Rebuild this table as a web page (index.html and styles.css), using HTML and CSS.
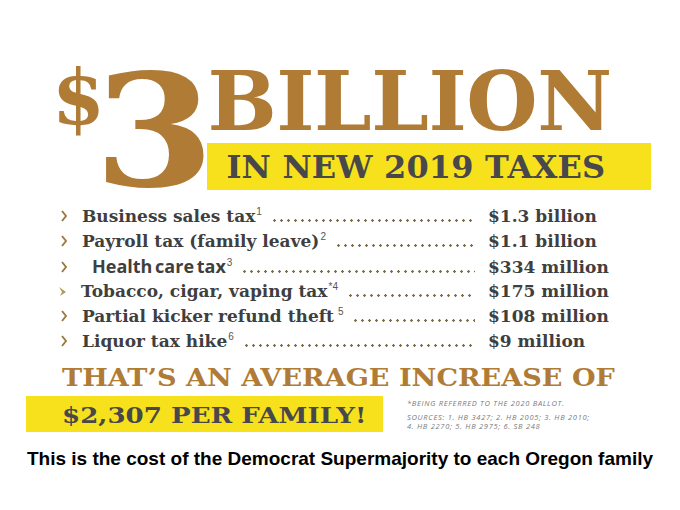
FILE: index.html
```html
<!DOCTYPE html>
<html lang="en">
<head>
<meta charset="utf-8">
<title>$3 Billion in new 2019 taxes</title>
<link rel="stylesheet" href="styles.css">
</head>
<body>
<main class="poster">
  <header class="headline">
    <span class="dollar">$</span>
    <span class="three">3</span>
    <div class="head-right">
      <div class="billion">BILLION</div>
      <div class="band"><span>IN NEW 2019 TAXES</span></div>
    </div>
  </header>

  <ul class="taxes">
    <li class="row">
      <svg class="chev" viewBox="0 0 6 12" width="6" height="12"><path d="M1 1 L5 6 L1 11" fill="none" stroke="#9a7840" stroke-width="1.9"/></svg>
      <span class="label">Business sales tax<sup>1</sup></span>
      <span class="lead"></span>
      <span class="amt">$1.3 billion</span>
    </li>
    <li class="row">
      <svg class="chev" viewBox="0 0 6 12" width="6" height="12"><path d="M1 1 L5 6 L1 11" fill="none" stroke="#9a7840" stroke-width="1.9"/></svg>
      <span class="label">Payroll tax (family leave)<sup>2</sup></span>
      <span class="lead"></span>
      <span class="amt">$1.1 billion</span>
    </li>
    <li class="row">
      <svg class="chev" viewBox="0 0 6 12" width="6" height="12"><path d="M1 1 L5 6 L1 11" fill="none" stroke="#9a7840" stroke-width="1.9"/></svg>
      <span class="label label-sans">Health care tax<sup>3</sup></span>
      <span class="lead"></span>
      <span class="amt">$334 million</span>
    </li>
    <li class="row">
      <svg class="chev chev-fill" viewBox="0 0 8 12" width="8" height="12"><path d="M0 2 L7 7 L1 11 L3 7 Z" fill="#b39a5a"/></svg>
      <span class="label">Tobacco, cigar, vaping tax<sup>*4</sup></span>
      <span class="lead"></span>
      <span class="amt">$175 million</span>
    </li>
    <li class="row">
      <svg class="chev" viewBox="0 0 6 12" width="6" height="12"><path d="M1 1 L5 6 L1 11" fill="none" stroke="#9a7840" stroke-width="1.9"/></svg>
      <span class="label">Partial kicker refund theft<sup class="sup-gap">5</sup></span>
      <span class="lead"></span>
      <span class="amt">$108 million</span>
    </li>
    <li class="row">
      <svg class="chev" viewBox="0 0 6 12" width="6" height="12"><path d="M1 1 L5 6 L1 11" fill="none" stroke="#9a7840" stroke-width="1.9"/></svg>
      <span class="label">Liquor tax hike<sup>6</sup></span>
      <span class="lead"></span>
      <span class="amt">$9 million</span>
    </li>
  </ul>

  <section class="summary">
    <div class="average"><span class="wide">THAT’S AN AVERAGE INCREASE OF</span></div>
    <div class="summary-row">
      <div class="band2"><span class="wide">$2,307 PER FAMILY!</span></div>
      <div class="notes">
        <p class="note-first">*BEING REFERRED TO THE 2020 BALLOT.</p>
        <p>SOURCES: 1. HB 3427; 2. HB 2005; 3. HB 2010;</p>
        <p>4. HB 2270; 5. HB 2975; 6. SB 248</p>
      </div>
    </div>
  </section>

  <p class="caption">This is the cost of the Democrat Supermajority to each Oregon family</p>
</main>
</body>
</html>
```

FILE: styles.css
```css
html, body {
  margin: 0;
  padding: 0;
  background: #ffffff;
}

.poster {
  width: 680px;
  height: 510px;
  overflow: hidden;
  font-family: "DejaVu Serif", "Liberation Serif", serif;
  font-weight: bold;
}

/* ---------- headline ---------- */
.headline {
  display: flex;
  align-items: flex-start;
  padding-top: 60px;
  padding-left: 52px;
  color: #b07c35;
}

.dollar {
  font-size: 76px;
  line-height: 76px;
  margin-top: 0;
}

.three {
  display: inline-block;
  font-size: 156px;
  line-height: 120px;
  margin-top: 12px;
  margin-left: -11px;
  margin-right: -1px;
  transform: scaleX(1.11);
  transform-origin: left center;
}

.head-right {
  display: flex;
  flex-direction: column;
  margin-left: 6px;
}

.billion {
  font-size: 82px;
  line-height: 82px;
  height: 82px;
  letter-spacing: -0.5px;
}

.band {
  margin-top: 1px;
  width: 444px;
  height: 47px;
  background: #f6e11c;
  display: flex;
  align-items: center;
  padding-left: 19px;
  box-sizing: border-box;
  color: #48484c;
  font-size: 32px;
  letter-spacing: 0.2px;
}

/* ---------- tax list ---------- */
.taxes {
  list-style: none;
  margin: 12px 0 0 0;
  padding: 0 0 0 61px;
  width: 628px;
  box-sizing: border-box;
  color: #3f3f40;
  font-size: 17px;
  line-height: 25px;
}

.row {
  display: flex;
  align-items: baseline;
  height: 25px;
}

.chev {
  flex: none;
  width: 6px;
  margin-right: 15px;
}

.chev-fill {
  width: 8px;
  margin-left: -2px;
  margin-right: 14px;
}

.label {
  white-space: nowrap;
}

.label-sans {
  font-family: "Open Sans", "Liberation Sans", sans-serif;
  font-size: 18px;
  margin-left: 10px;
  word-spacing: -2px;
}

sup {
  font-family: "Liberation Sans", sans-serif;
  font-weight: normal;
  font-size: 10px;
  line-height: 0;
  vertical-align: 7px;
  margin-left: 1px;
  color: #555;
}

.sup-gap {
  margin-left: 4px;
}

.lead {
  flex: 1;
  height: 3px;
  margin: 0 13px 0 9px;
  background-image: radial-gradient(circle, #7d6e4e 1px, rgba(255,255,255,0) 1.5px);
  background-size: 7px 3px;
  background-repeat: repeat-x;
  background-position: 0 0;
}

.amt {
  flex: none;
  width: 140px;
  white-space: nowrap;
}

/* ---------- summary ---------- */
.summary {
  margin-top: 12px;
}

.wide {
  display: inline-block;
  white-space: nowrap;
  transform-origin: left center;
}

.average {
  padding-left: 62px;
  color: #b07c35;
  font-size: 24px;
  line-height: 24px;
  height: 24px;
}

.average .wide {
  transform: scaleX(1.13);
}

.summary-row {
  display: flex;
  align-items: flex-start;
  margin-top: 6px;
}

.band2 {
  margin-left: 26px;
  width: 357px;
  height: 36px;
  background: #f6e11c;
  display: flex;
  align-items: center;
  padding-left: 36px;
  box-sizing: border-box;
  color: #48484c;
  font-size: 23px;
}

.band2 .wide {
  transform: scaleX(1.135);
}

.notes {
  margin-left: 24px;
  margin-top: 3px;
  font-family: "Open Sans", "Liberation Sans", sans-serif;
  font-style: italic;
  font-weight: normal;
  font-size: 7.5px;
  letter-spacing: 0.7px;
  color: #7a7a7a;
}

.notes p {
  margin: 0;
  line-height: 9px;
  white-space: nowrap;
}

.notes .note-first {
  margin-bottom: 5px;
}

/* ---------- caption ---------- */
.caption {
  margin: 16px 0 0 0;
  text-align: center;
  font-family: "Liberation Sans", Arial, sans-serif;
  font-weight: bold;
  font-size: 19px;
  color: #000;
}
```
